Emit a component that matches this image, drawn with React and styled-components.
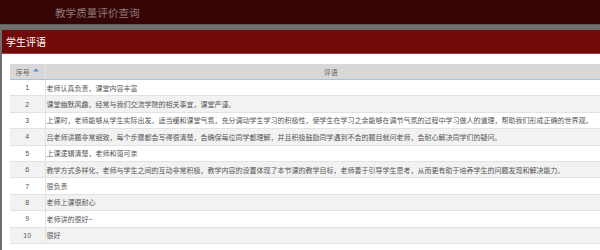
import React from "react";
import styled, { createGlobalStyle } from "styled-components";

const GlobalStyle = createGlobalStyle`
  html, body {
    margin: 0;
    padding: 0;
    background: #6e6e6e;
    overflow: hidden;
    font-family: "Liberation Sans", "Noto Sans CJK SC", sans-serif;
  }
`;

const comments = [
  "老师认真负责，课堂内容丰富",
  "课堂幽默风趣，经常与我们交流学院的相关事宜，课堂严谨。",
  "上课时，老师能够从学生实际出发，适当缓和课堂气氛，充分调动学生学习的积极性，使学生在学习之余能够在调节气氛的过程中学习做人的道理，帮助我们形成正确的世界观。",
  "吕老师讲题非常细致，每个步骤都会写得很清楚，会确保每位同学都理解，并且积极鼓励同学遇到不会的题目就问老师，会耐心解决同学们的疑问。",
  "上课逻辑清楚，老师和蔼可亲",
  "教学方式多样化，老师与学生之间的互动非常积极，教学内容的设置体现了本节课的教学目标，老师善于引导学生思考，从而更有助于培养学生的问题发现和解决能力。",
  "很负责",
  "老师上课很耐心",
  "老师讲的很好~",
  "很好",
];

const App = () => {
  return (
    <>
      <GlobalStyle />
      <TopBar>
        <Title>教学质量评价查询</Title>
      </TopBar>
      <Band />
      <Body>
        <Panel>
          <PanelHeader>学生评语</PanelHeader>
          <PanelContent>
            <Table>
              <colgroup>
                <col style={{ width: 35 }} />
                <col />
              </colgroup>
              <thead>
                <tr>
                  <HeadCell>
                    序号
                    <SortIcon width="6" height="8" viewBox="0 0 6 8">
                      <path d="M3 0.5 L5.8 3.6 L0.2 3.6 Z" fill="#3a8ee6" />
                      <path d="M3 7.5 L5.8 4.4 L0.2 4.4 Z" fill="#c9d9ea" />
                    </SortIcon>
                  </HeadCell>
                  <HeadCell>评语</HeadCell>
                </tr>
              </thead>
              <tbody>
                {comments.map((text, i) => (
                  <Row key={i} $even={i % 2 === 1}>
                    <NumCell>{i + 1}</NumCell>
                    <TextCell>{text}</TextCell>
                  </Row>
                ))}
              </tbody>
            </Table>
          </PanelContent>
        </Panel>
      </Body>
    </>
  );
};

export default App;

const TopBar = styled.div`
  height: 24px;
  background: #360506;
  padding-left: 55px;
  display: flex;
  align-items: center;
`;
const Title = styled.div`
  color: #8d7a7a;
  font-size: 10.5px;
  letter-spacing: 0.1px;
`;
const Band = styled.div`
  height: 6px;
  background: linear-gradient(#5a5a5a 0, #5a5a5a 1px, #737373 1px, #6c6c6c 100%);
`;
const Body = styled.div`
  width: 600px;
  height: 220px;
  padding-left: 2px;
  box-sizing: border-box;
  overflow: hidden;
`;
const Panel = styled.div`
  width: 640px;
  height: 220px;
  background: #fff;
  border-radius: 4px 4px 0 0;
`;
const PanelHeader = styled.div`
  height: 24px;
  background: #720909;
  border-bottom: 1px solid #9a4040;
  box-sizing: border-box;
  color: #fff;
  font-size: 10px;
  padding-left: 4px;
  display: flex;
  align-items: center;
`;
const PanelContent = styled.div`
  padding: 10px 0 0 8px;
`;
const Table = styled.table`
  width: 607px;
  border-collapse: collapse;
  table-layout: fixed;
  font-size: 7px;
  color: #555;
`;
const HeadCell = styled.th`
  height: 15px;
  padding: 0;
  background: #d8d8d8;
  border-bottom: 1px solid #9fc3e4;
  border-right: 1px solid #e4e4e4;
  font-weight: normal;
  color: #666;
  font-size: 7px;
  text-align: center;
  vertical-align: middle;
`;
const SortIcon = styled.svg`
  margin-left: 3px;
  vertical-align: -1px;
`;
const Row = styled.tr`
  background: ${(p) => (p.$even ? "#f2f2f2" : "#fff")};
  height: 16.4px;
  border-bottom: 1px solid #e2e2e2;
`;
const NumCell = styled.td`
  padding: 0;
  text-align: center;
  border-right: 1px solid #e2e2e2;
  vertical-align: middle;
`;
const TextCell = styled.td`
  padding: 0 0 0 1px;
  white-space: nowrap;
  vertical-align: middle;
`;
